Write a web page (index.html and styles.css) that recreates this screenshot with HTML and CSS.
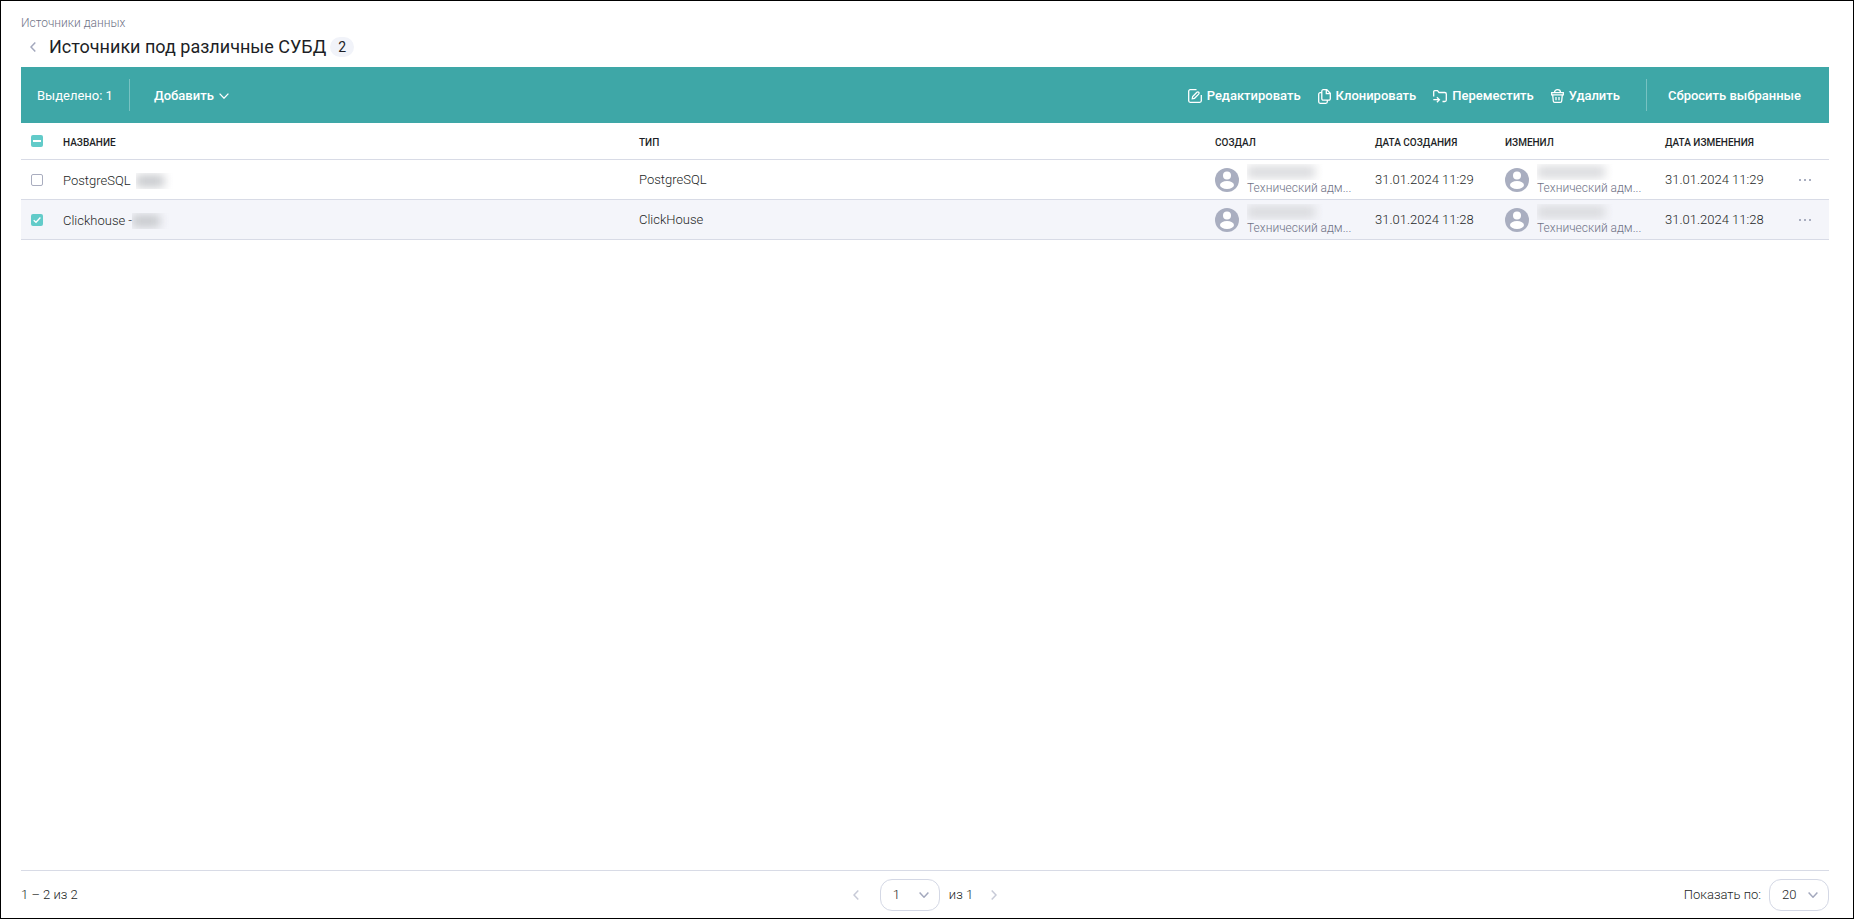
FILE: index.html
```html
<!DOCTYPE html>
<html lang="ru">
<head>
<meta charset="utf-8">
<title>Источники данных</title>
<link rel="stylesheet" href="styles.css">
</head>
<body>
<main class="page">
  <header class="head">
    <a class="crumb" href="#">Источники данных</a>
    <div class="title-row">
      <button class="back" type="button" aria-label="Назад"><svg class="chev" width="6" height="10" viewBox="0 0 6 10"><path d="M5.3.6 1 5l4.300 4.400"/></svg></button>
      <h1 class="title">Источники под различные СУБД</h1>
      <span class="count">2</span>
    </div>
  </header>

  <div class="toolbar">
    <span class="selected">Выделено: 1</span>
    <span class="divider"></span>
    <button class="action add" type="button">Добавить
      <svg width="10" height="6" viewBox="0 0 10 6"><path d="M.6.6 5 5.200 9.400.6"/></svg>
    </button>
    <div class="actions">
      <button class="action" type="button"><svg width="14" height="14" viewBox="0 0 14 14"><path d="M8.500.7H2.200A1.500 1.500 0 0 0 .7 2.200v9.600a1.500 1.500 0 0 0 1.500 1.500h9.600a1.500 1.500 0 0 0 1.500-1.500V6M4.300 9.700l.4-2.200 4.200-4.200a1.200 1.200 0 0 1 1.800 1.800L6.500 9.300z"/></svg>Редактировать</button>
      <button class="action" type="button"><svg width="13" height="15" viewBox="0 0 13 15"><path d="M5.300.7h3.500l3.500 3.500v5.500a1.500 1.500 0 0 1-1.500 1.500H5.300a1.500 1.500 0 0 1-1.500-1.500V2.200A1.500 1.500 0 0 1 5.300.7zM8.300.7v4h4M3.500 3.700H2.200A1.500 1.500 0 0 0 .7 5.200v7.600a1.500 1.500 0 0 0 1.500 1.500h5.600a1.500 1.500 0 0 0 1.500-1.500v-1.300"/></svg>Клонировать</button>
      <button class="action" type="button"><svg width="14" height="13" viewBox="0 0 14 13"><path d="M.7 6.500V1.700a1 1 0 0 1 1-1h2.800l1.500 1.800h5.800a1.500 1.500 0 0 1 1.500 1.500v6a1.500 1.500 0 0 1-1.500 1.500H9.500M.3 9.700h5.600M3.900 7.200l2.500 2.500-2.500 2.500"/></svg>Переместить</button>
      <button class="action" type="button"><svg width="13" height="14" viewBox="0 0 13 14"><path d="M.7 3.700h11.600v2.100H.7zM3.500 3.500C3.500 1.700 4.800.7 6.500.7s3 1 3 2.800M1.700 6l.6 6a1.400 1.400 0 0 0 1.400 1.300h5.600a1.400 1.400 0 0 0 1.400-1.300l.6-6M5 8v3.300M8 8v3.300"/></svg>Удалить</button>
    </div>
    <span class="divider"></span>
    <button class="action reset" type="button">Сбросить выбранные</button>
  </div>

  <table class="grid">
    <colgroup><col class="c-check"><col><col><col class="c-user"><col class="c-date"><col class="c-user"><col class="c-date"><col class="c-menu"></colgroup>
    <thead>
      <tr>
        <th class="check"><input class="box mixed" type="checkbox" aria-label="Выбрать все" checked></th>
        <th>НАЗВАНИЕ</th><th>ТИП</th><th>СОЗДАЛ</th><th>ДАТА СОЗДАНИЯ</th><th>ИЗМЕНИЛ</th><th>ДАТА ИЗМЕНЕНИЯ</th><th></th>
      </tr>
    </thead>
    <tbody>
      <tr>
        <td class="check"><input class="box" type="checkbox" aria-label="PostgreSQL"></td>
        <td><div class="name">PostgreSQL <span class="veil short"><i></i></span></div></td>
        <td>PostgreSQL</td>
        <td><div class="user"><svg class="avatar" viewBox="0 0 24 24"><circle class="disc" cx="12" cy="12" r="12"/><circle cx="12" cy="7.500" r="4"/><ellipse cx="12" cy="17" rx="7" ry="4"/></svg><div class="who"><span class="veil"><i></i></span><span class="role">Технический адм...</span></div></div></td>
        <td>31.01.2024 11:29</td>
        <td><div class="user"><svg class="avatar" viewBox="0 0 24 24"><circle class="disc" cx="12" cy="12" r="12"/><circle cx="12" cy="7.500" r="4"/><ellipse cx="12" cy="17" rx="7" ry="4"/></svg><div class="who"><span class="veil"><i></i></span><span class="role">Технический адм...</span></div></div></td>
        <td>31.01.2024 11:29</td>
        <td><button class="more" type="button" aria-label="Действия"><svg width="13" height="2" viewBox="0 0 13 2"><path d="M0 0h2v2H0zM5 0h2v2H5zM10 0h2v2h-2z"/></svg></button></td>
      </tr>
      <tr class="active">
        <td class="check"><input class="box" type="checkbox" aria-label="Clickhouse" checked></td>
        <td><div class="name">Clickhouse <span class="dash">-</span><span class="veil short"><i></i></span></div></td>
        <td>ClickHouse</td>
        <td><div class="user"><svg class="avatar" viewBox="0 0 24 24"><circle class="disc" cx="12" cy="12" r="12"/><circle cx="12" cy="7.500" r="4"/><ellipse cx="12" cy="17" rx="7" ry="4"/></svg><div class="who"><span class="veil"><i></i></span><span class="role">Технический адм...</span></div></div></td>
        <td>31.01.2024 11:28</td>
        <td><div class="user"><svg class="avatar" viewBox="0 0 24 24"><circle class="disc" cx="12" cy="12" r="12"/><circle cx="12" cy="7.500" r="4"/><ellipse cx="12" cy="17" rx="7" ry="4"/></svg><div class="who"><span class="veil"><i></i></span><span class="role">Технический адм...</span></div></div></td>
        <td>31.01.2024 11:28</td>
        <td><button class="more" type="button" aria-label="Действия"><svg width="13" height="2" viewBox="0 0 13 2"><path d="M0 0h2v2H0zM5 0h2v2H5zM10 0h2v2h-2z"/></svg></button></td>
      </tr>
    </tbody>
  </table>

  <footer class="foot">
    <span class="range">1 – 2 из 2</span>
    <nav class="pager" aria-label="Страницы">
      <button class="step prev" type="button" aria-label="Предыдущая"><svg class="chev" width="6" height="10" viewBox="0 0 6 10"><path d="M5.300.6 1 5l4.300 4.400"/></svg></button>
      <span class="pick"><select aria-label="Страница"><option>1</option></select><svg class="chev" width="10" height="6" viewBox="0 0 10 6"><path d="M.6.6 5 5.200 9.400.6"/></svg></span>
      <span>из 1</span>
      <button class="step" type="button" aria-label="Следующая"><svg class="chev" width="6" height="10" viewBox="0 0 6 10"><path d="M.7.6 5 5 .7 9.400"/></svg></button>
    </nav>
    <div class="size">
      <label for="size">Показать по:</label>
      <span class="pick"><select id="size"><option>20</option></select><svg class="chev" width="10" height="6" viewBox="0 0 10 6"><path d="M.6.6 5 5.200 9.400.6"/></svg></span>
    </div>
  </footer>
</main>
</body>
</html>
```
FILE: styles.css
```css
* { box-sizing: border-box; }

body {
  margin: 0;
  font: 400 13px/16px Roboto, "Noto Sans", sans-serif;
  color: #1d1f26;
  background: #fff;
}

button, select { font: inherit; color: inherit; }
button { display: flex; align-items: center; padding: 0; border: 0; background: none; }
svg { flex: none; fill: none; }

.page {
  display: flex;
  flex-direction: column;
  min-height: 100vh;
  padding: 14px 24px 0 20px;
  border: 1px solid #000;
}

.chev { stroke: #a3a8bd; stroke-width: 1.5; }

.head { display: flex; flex-direction: column; align-items: flex-start; height: 52px; }
.crumb { font-size: 12px; font-weight: 300; color: #6f7387; text-decoration: none; }
.title-row { display: flex; align-items: center; height: 32px; padding-left: 9px; }
.back { width: 19px; height: 20px; }
.title { margin: 0; font-size: 18px; line-height: 24px; font-weight: 400; }
.count {
  margin-left: 4px;
  padding: 0 8px;
  border-radius: 10px;
  background: #f1f3f9;
  font-size: 14px;
  line-height: 20px;
}

.toolbar {
  display: flex;
  align-items: center;
  height: 56px;
  padding: 0 28px 0 16px;
  background: #3ea7a7;
  color: #fff;
}
.divider { width: 1px; height: 32px; background: #78c2c2; }
.selected { margin-right: 16px; padding-top: 2px; }
.action { gap: 5px; padding-top: 2px; font-weight: 500; white-space: nowrap; }
.action svg { stroke: #fff; stroke-width: 1.3; }
.add { margin-left: 24px; }
.actions { display: flex; gap: 17px; margin: 0 26px 0 auto; }
.reset { margin-left: 21px; }

.grid { width: 100%; table-layout: fixed; border-collapse: separate; border-spacing: 0; }
.c-check { width: 42px; }
.c-user { width: 160px; }
.c-date { width: 130px; }
.c-menu { width: 34px; }
.grid th, .grid td { padding: 0; text-align: left; vertical-align: middle; border-bottom: 1px solid #d8dbe6; }
.grid th { height: 37px; padding-top: 3px; font-size: 10px; font-weight: 500; }
.grid td { height: 40px; font-weight: 300; }
.grid .check { padding: 0 0 0 10px; }
.active td { background: #f4f5fa; }

.box {
  display: block;
  width: 12px;
  height: 12px;
  margin: 0;
  appearance: none;
  border: 1px solid #a9adbf;
  border-radius: 2px;
  background: #fff;
}
.box:checked {
  border: 0;
  background: #62cbc9 url("data:image/svg+xml,%3Csvg xmlns='http://www.w3.org/2000/svg' viewBox='0 0 12 12'%3E%3Cpath d='M2.700 6.200 5 8.300 9.400 3.500' fill='none' stroke='white' stroke-width='1.300'/%3E%3C/svg%3E");
}
.box.mixed:checked {
  background-image: url("data:image/svg+xml,%3Csvg xmlns='http://www.w3.org/2000/svg' viewBox='0 0 12 12'%3E%3Cpath d='M2 6h8' stroke='white' stroke-width='2'/%3E%3C/svg%3E");
}

.name { display: flex; align-items: center; padding-top: 2px; }
.dash { margin-left: 3px; }
.veil { display: flex; align-items: center; width: 76px; height: 16px; overflow: hidden; }
.veil i { flex: 1; height: 12px; margin-right: 8px; background: #d9dadd; filter: blur(5px); }
.veil.short { width: 38px; margin-left: 5px; }
.dash + .veil.short { margin-left: 0; }
.veil.short i { margin-right: 10px; background: #c6c8cc; }

.user { display: flex; align-items: center; gap: 8px; }
.avatar { width: 24px; height: 24px; fill: #fff; }
.disc { fill: #a9aec0; }
.role { display: block; font-size: 12px; color: #6f7387; white-space: nowrap; }
.more { width: 20px; height: 20px; padding-left: 4px; }
.more svg { fill: #a9aec0; }

.foot {
  display: grid;
  grid-template-columns: 1fr auto 1fr;
  align-items: center;
  height: 48px;
  margin-top: auto;
  border-top: 1px solid #d8dbe6;
  font-weight: 300;
}
.pager { display: flex; align-items: center; gap: 9px; }
.step { justify-content: center; width: 24px; height: 24px; opacity: .6; }
.prev { margin-right: 3px; }
.size { display: flex; align-items: center; justify-content: flex-end; gap: 8px; }
.pick { display: grid; align-items: center; width: 60px; height: 32px; }
.pick > * { grid-area: 1 / 1; }
.pick select {
  width: 100%;
  height: 100%;
  padding: 0 12px;
  appearance: none;
  border: 1px solid #d4d8e5;
  border-radius: 12px;
  background: #fff;
}
.pick .chev { justify-self: end; margin-right: 11px; pointer-events: none; }
```
